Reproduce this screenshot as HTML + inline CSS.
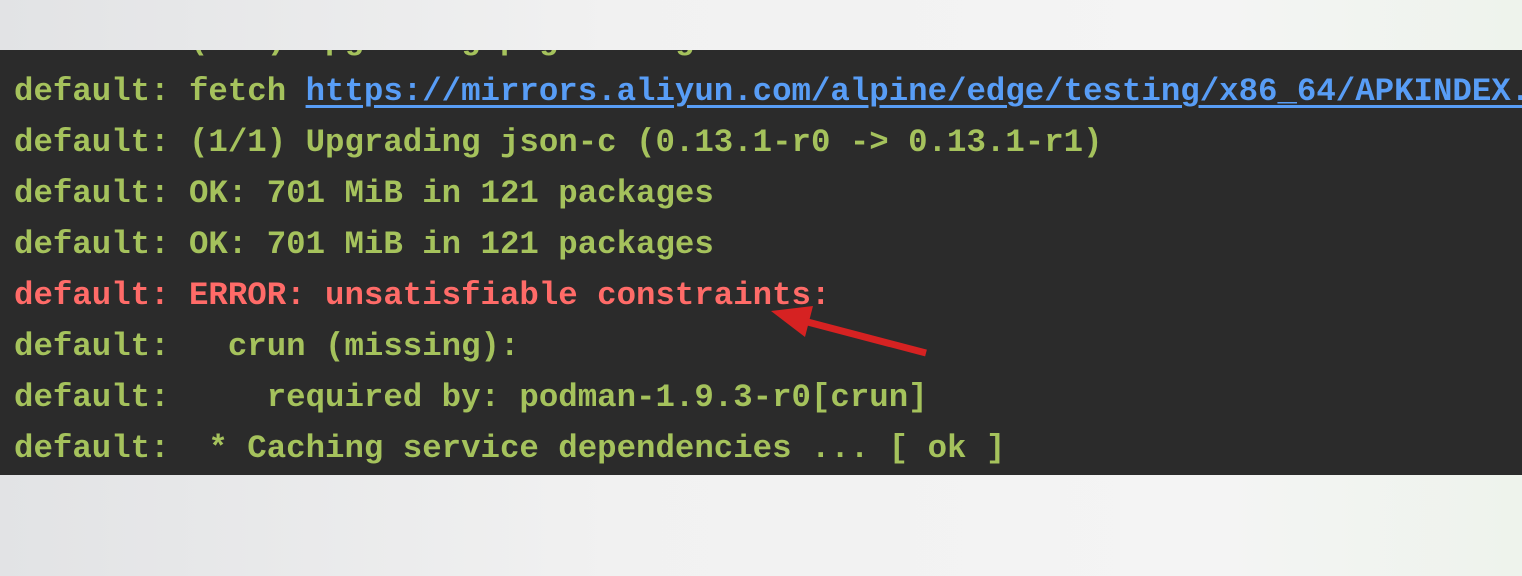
<!DOCTYPE html>
<html><head><style>
html,body{margin:0;padding:0}
body{width:1522px;height:576px;overflow:hidden;background:linear-gradient(90deg,#e2e3e5 0%,#f1f1f1 40%,#f4f4f4 80%,#eef3ec 100%);position:relative}
.t{position:absolute;left:0;top:50px;width:1522px;height:425px;background:#2b2b2b;overflow:hidden}
.in{position:absolute;left:14px;top:-35px;font-family:"Liberation Mono",monospace;font-size:32.4px;font-weight:bold;line-height:51px;color:#a5c25c;white-space:pre}
.l{color:#589df6;text-decoration:underline;text-underline-offset:5px}
.r{color:#ff6b68}
svg{position:absolute;left:0;top:0}
</style></head><body>
<div class="t"><div class="in">default: (1/1) Upgrading pkg-config
default: fetch <span class="l">https://mirrors.aliyun.com/alpine/edge/testing/x86_64/APKINDEX.tar.gz</span>
default: (1/1) Upgrading json-c (0.13.1-r0 -&gt; 0.13.1-r1)
default: OK: 701 MiB in 121 packages
default: OK: 701 MiB in 121 packages
<span class="r">default: ERROR: unsatisfiable constraints:</span>
default:   crun (missing):
default:     required by: podman-1.9.3-r0[crun]
default:  * Caching service dependencies ... [ ok ]</div></div>
<svg width="1522" height="576"><line x1="926" y1="353" x2="800" y2="320" stroke="#d62222" stroke-width="7"/><polygon points="771,311 813,306 805,337" fill="#d62222"/></svg>
</body></html>
